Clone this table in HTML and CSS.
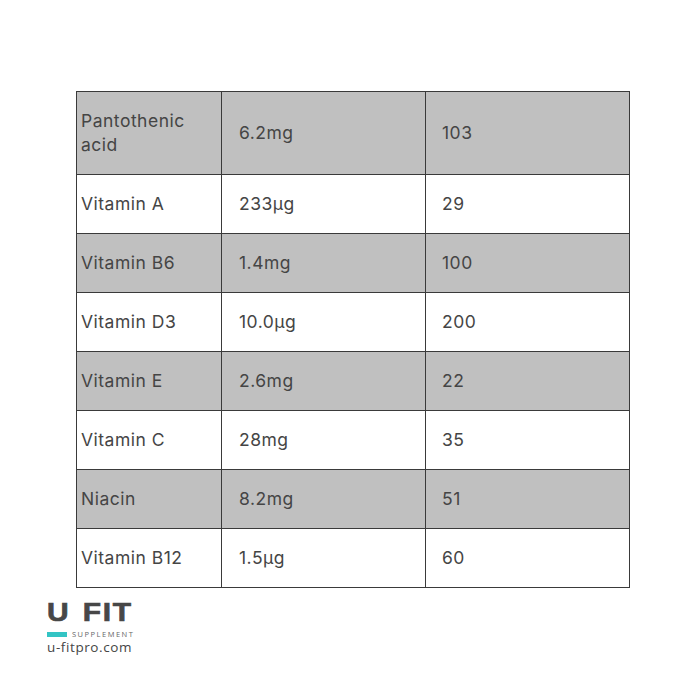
FILE: index.html
```html
<!DOCTYPE html>
<html>
<head>
<meta charset="utf-8">
<link rel="stylesheet" href="styles.css">
</head>
<body>
<div class="page">
  <table class="nutri">
    <tr class="gray tall"><td class="c1">Pantothenic<br>acid</td><td class="c2">6.2mg</td><td class="c3">103</td></tr>
    <tr><td class="c1">Vitamin A</td><td class="c2">233μg</td><td class="c3">29</td></tr>
    <tr class="gray"><td class="c1">Vitamin B6</td><td class="c2">1.4mg</td><td class="c3">100</td></tr>
    <tr><td class="c1">Vitamin D3</td><td class="c2">10.0μg</td><td class="c3">200</td></tr>
    <tr class="gray"><td class="c1">Vitamin E</td><td class="c2">2.6mg</td><td class="c3">22</td></tr>
    <tr><td class="c1">Vitamin C</td><td class="c2">28mg</td><td class="c3">35</td></tr>
    <tr class="gray"><td class="c1">Niacin</td><td class="c2">8.2mg</td><td class="c3">51</td></tr>
    <tr class="last"><td class="c1">Vitamin B12</td><td class="c2">1.5μg</td><td class="c3">60</td></tr>
  </table>
  <div class="logo">
    <div class="brand">U FIT</div>
    <div class="sub"><span class="bar"></span><span class="supp">SUPPLEMENT</span></div>
    <div class="url">u-fitpro.com</div>
  </div>
</div>
</body>
</html>
```

FILE: styles.css
```css
html, body {
  margin: 0;
  padding: 0;
  background: #ffffff;
}
.page {
  width: 700px;
  height: 700px;
  position: relative;
  font-family: "Inter", "Open Sans", sans-serif;
  color: #454545;
}
.nutri {
  position: absolute;
  left: 76px;
  top: 91px;
  border-collapse: collapse;
  width: 554px;
  border: 1.5px solid #3a3a3a;
}
.nutri td {
  border: 1.5px solid #3a3a3a;
  height: 58px;
  padding: 0;
  font-size: 17.5px;
  line-height: 24px;
  vertical-align: middle;
  font-weight: 400;
  letter-spacing: 0.5px;
}
.nutri tr.tall td {
  height: 82px;
}
.nutri tr.gray td {
  background: #c0c0c0;
}
.nutri .c1 {
  width: 140px;
  padding-left: 4px;
}
.nutri .c2 {
  width: 186px;
  padding-left: 17px;
}
.nutri .c3 {
  padding-left: 16px;
}
.logo {
  position: absolute;
  left: 47px;
  top: 598px;
  width: 90px;
}
.brand {
  font-family: "Liberation Sans", Arial, sans-serif;
  font-weight: 700;
  font-size: 26px;
  line-height: 28px;
  color: #474747;
  letter-spacing: 1.5px;
  word-spacing: 2px;
  transform: scaleX(1.15);
  transform-origin: left center;
  white-space: nowrap;
  -webkit-text-stroke: 0.7px #474747;
}
.sub {
  display: flex;
  align-items: center;
  margin-top: 4px;
  height: 8px;
}
.bar {
  display: block;
  width: 20px;
  height: 5px;
  background: #33c4c4;
}
.supp {
  font-family: "Open Sans", sans-serif;
  font-size: 7.5px;
  letter-spacing: 1.5px;
  color: #666;
  margin-left: 5px;
  line-height: 8px;
  white-space: nowrap;
}
.url {
  font-family: "Open Sans", sans-serif;
  font-size: 13.5px;
  letter-spacing: 0.6px;
  color: #454545;
  line-height: 16px;
  margin-top: 1px;
  white-space: nowrap;
}
```
